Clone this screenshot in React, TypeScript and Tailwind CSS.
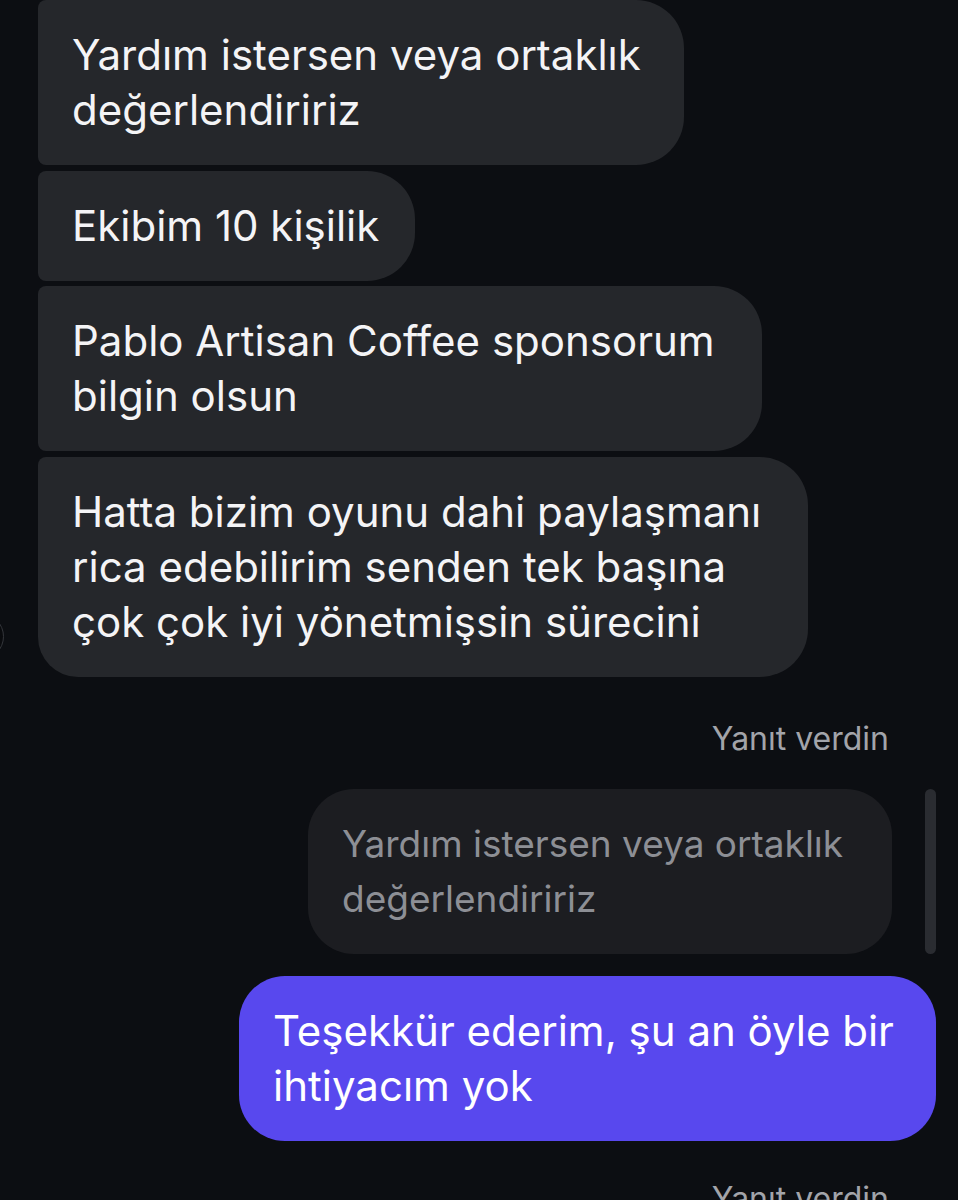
import React from "react";

const leftMessages = [
  { lines: ["Yardım istersen veya ortaklık", "değerlendiririz"], width: "w-[646px]", gap: "mt-0", corner: "rounded-bl-[8px]" },
  { lines: ["Ekibim 10 kişilik"], width: "w-[377px]", gap: "mt-[6px]", corner: "rounded-bl-[8px]" },
  { lines: ["Pablo Artisan Coffee sponsorum", "bilgin olsun"], width: "w-[724px]", gap: "mt-[5px]", corner: "rounded-bl-[8px]" },
  {
    lines: ["Hatta bizim oyunu dahi paylaşmanı", "rica edebilirim senden tek başına", "çok çok iyi yönetmişsin sürecini"],
    width: "w-[770px]",
    gap: "mt-[6px]",
    corner: "rounded-bl-[40px]",
  },
];

function Lines({ lines }: { lines: string[] }) {
  return (
    <>
      {lines.map((line, i) => (
        <div key={i} className="whitespace-nowrap">
          {line}
        </div>
      ))}
    </>
  );
}

export default function App() {
  return (
    <div
      className="relative h-[1200px] w-[958px] overflow-hidden bg-[#0c0e12] text-white"
      style={{ fontFamily: "Inter, 'Noto Sans', sans-serif" }}
    >
      {/* avatar peeking from the left edge */}
      <div className="absolute -left-[43px] top-[613px] h-[47px] w-[47px] rounded-full border border-[#34363b] bg-[#0a0b0e]" />

      <div className="flex flex-col">
        {/* incoming group */}
        <div className="flex flex-col items-start pl-[38px]">
          {leftMessages.map((m, i) => (
            <div
              key={i}
              className={`${m.width} ${m.gap} ${m.corner} rounded-tl-[8px] rounded-r-[48px] bg-[#25272b] pb-[28px] pl-[34px] pt-[27px] text-[42px] leading-[55px] text-[#f4f4f6]`}
            >
              <Lines lines={m.lines} />
            </div>
          ))}
        </div>

        {/* reply label */}
        <div className="mt-[42px] pr-[69px] text-right text-[32px] leading-[40px] text-[#a2a4aa]">
          Yanıt verdin
        </div>

        {/* quoted message + reply bar */}
        <div className="mt-[30px] flex items-stretch justify-end gap-[33px] pr-[22px]">
          <div className="w-[584px] rounded-[46px] bg-[#1c1d21] pb-[28px] pl-[34px] pt-[27px] text-[37px] leading-[55px] text-[#8d8f95]">
            <Lines lines={["Yardım istersen veya ortaklık", "değerlendiririz"]} />
          </div>
          <div className="w-[11px] rounded-full bg-[#2a2c31]" />
        </div>

        {/* outgoing message */}
        <div className="mt-[22px] flex justify-end pr-[22px]">
          <div className="w-[697px] rounded-[46px] bg-[#5848ee] pb-[28px] pl-[34px] pt-[27px] text-[42px] leading-[55px] text-white">
            <Lines lines={["Teşekkür ederim, şu an öyle bir", "ihtiyacım yok"]} />
          </div>
        </div>

        <div className="mt-[38px] pr-[69px] text-right text-[32px] leading-[40px] text-[#a2a4aa]">
          Yanıt verdin
        </div>
      </div>
    </div>
  );
}
